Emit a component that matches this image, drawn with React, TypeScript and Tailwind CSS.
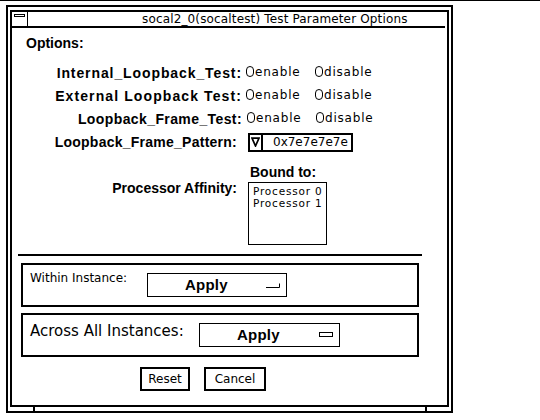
import React from 'react'

const bold = "font-['Liberation_Sans',Arial,sans-serif] font-bold text-[14px] leading-[16px] text-black"
const plain = "font-['DejaVu_Sans',Verdana,sans-serif] text-black"

function Radio({ label }: { label: string }) {
  return (
    <span className="flex items-center">
      <span className="w-[8px] h-[11px] rounded-full border border-black" />
      <span className={`${plain} ml-[1px] text-[12px] leading-[14px] tracking-[0.8px]`}>{label}</span>
    </span>
  )
}

function RadioPair() {
  return (
    <div className="ml-[5px] flex items-center -mt-[2px]">
      <div className="w-[69px]">
        <Radio label="enable" />
      </div>
      <Radio label="disable" />
    </div>
  )
}

function ApplyButton({ width, mark }: { width: string; mark: 'tick' | 'box' }) {
  return (
    <div className={`${width} mt-[8px] h-[24px] border border-black flex items-center pl-[37px] pr-[6px]`}>
      <span className="font-['Liberation_Sans',Arial,sans-serif] font-bold text-[15px] leading-[18px] tracking-[0.2px]">Apply</span>
      <span className="ml-auto flex">
        {mark === 'tick' ? (
          <svg width="14" height="6" viewBox="0 0 14 6">
            <path d="M0 5.5 H13.5 V1.5" stroke="black" strokeWidth="1" fill="none" />
          </svg>
        ) : (
          <svg width="14" height="6" viewBox="0 0 14 6">
            <rect x="0.5" y="0.5" width="13" height="4" stroke="black" strokeWidth="1" fill="none" />
          </svg>
        )}
      </span>
    </div>
  )
}

export default function App() {
  return (
    <div className="w-[540px] h-[420px] bg-white border-t border-black overflow-hidden">
      {/* outer window frame */}
      <div className="ml-[6px] mt-[4px] w-[447px] h-[408px] border-2 border-black pt-[3px] px-[2px] flex flex-col">
        <div className="flex-1 border-2 border-black flex flex-col">
          {/* title bar */}
          <div className="h-[16px] mr-[2px] border-b-2 border-black flex">
            <div className="w-[16px] h-full border-r border-black flex justify-center pt-[2px]">
              <div className="w-[11px] h-[3px] border border-black" />
            </div>
            <div className={`${plain} pl-[114px] text-[12px] leading-[14px] tracking-[0.15px] flex items-center`}>
              socal2_0(socaltest) Test Parameter Options
            </div>
          </div>

          {/* body */}
          <div className="flex flex-col">
            <div className={`${bold} mt-[7px] ml-[14px]`}>Options:</div>

            <div className="mt-[10px] flex items-center h-[23px]">
              <div className={`${bold} w-[230px] shrink-0 text-right tracking-[0.9px] -mr-[1px]`}>Internal_Loopback_Test:</div>
              <RadioPair />
            </div>
            <div className="flex items-center h-[23px]">
              <div className={`${bold} w-[230px] shrink-0 text-right tracking-[1.1px] -mr-[1px]`}>External Loopback Test:</div>
              <RadioPair />
            </div>
            <div className="flex items-center h-[23px]">
              <div className={`${bold} w-[230px] shrink-0 text-right tracking-[0.4px]`}>Loopback_Frame_Test:</div>
              <RadioPair />
            </div>

            <div className="flex items-center h-[24px]">
              <div className={`${bold} w-[225px] shrink-0 text-right tracking-[0.25px]`}>Loopback_Frame_Pattern:</div>
              <div className="ml-[11px] w-[105px] h-[19px] border-2 border-black flex">
                <div className="w-[13px] h-full border-r-2 border-black flex items-center justify-center">
                  <svg width="9" height="10" viewBox="0 0 9 10">
                    <path d="M1 1.2 H8 L4.5 9 Z" stroke="black" strokeWidth="1.7" fill="none" strokeLinejoin="miter" />
                  </svg>
                </div>
                <div className={`${plain} pl-[10px] text-[12px] leading-[15px] flex items-center`}>0x7e7e7e7e</div>
              </div>
            </div>

            <div className={`${bold} mt-[10px] ml-[238px]`}>Bound to:</div>
            <div className="flex items-start">
              <div className={`${bold} w-[225px] shrink-0 text-right`}>Processor Affinity:</div>
              <div className={`${plain} ml-[11px] mt-[2px] w-[79px] h-[63px] border border-black pl-[4px] pt-[2px] text-[10.5px] leading-[12px] tracking-[0.8px]`}>
                <div>Processor 0</div>
                <div>Processor 1</div>
              </div>
            </div>

            <div className="mt-[9px] ml-[6px] w-[404px] h-[2px] bg-black" />

            {/* within instance */}
            <div className="mt-[7px] ml-[9px] w-[398px] h-[44px] border-2 border-black flex items-start pl-[7px]">
              <div className={`${plain} w-[117px] shrink-0 pt-[6px] text-[12px] leading-[14px]`}>Within Instance:</div>
              <ApplyButton width="w-[140px]" mark="tick" />
            </div>

            {/* across all instances */}
            <div className="mt-[6px] ml-[9px] w-[398px] h-[44px] border-2 border-black flex items-start pl-[7px]">
              <div className={`${plain} w-[169px] shrink-0 pt-[7px] text-[15px] leading-[18px]`}>Across All Instances:</div>
              <ApplyButton width="w-[141px]" mark="box" />
            </div>

            <div className="mt-[10px] pl-[128px] flex">
              <button className={`${plain} w-[50px] h-[24px] border-2 border-black text-[12px] leading-[14px] flex items-center justify-center`}>Reset</button>
              <button className={`${plain} ml-[14px] w-[62px] h-[24px] border-2 border-black text-[12px] leading-[14px] flex items-center justify-center`}>Cancel</button>
            </div>
          </div>
        </div>
        {/* resize corner ticks */}
        <div className="h-[4px] flex">
          <div className="ml-[23px] w-[2px] h-full bg-black" />
          <div className="ml-[390px] w-[2px] h-full bg-black" />
        </div>
      </div>
    </div>
  )
}
